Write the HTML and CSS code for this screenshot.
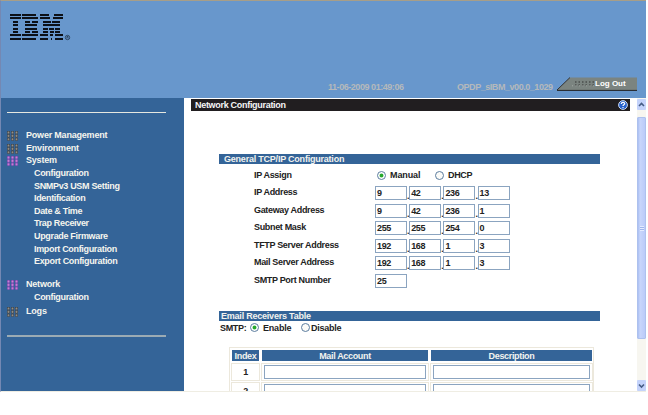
FILE: index.html
```html
<!DOCTYPE html>
<html lang="en">
<head>
<meta charset="utf-8">
<title>Network Configuration</title>
<link rel="stylesheet" href="styles.css">
</head>
<body>
<div class="frame">
  <header class="header">
    <svg class="logo" viewBox="0 0 62 27" role="img" aria-label="IBM">
      <g class="stripes">
        <path d="M0 1h10.5M12 1h14M29.5 1h9.5M44 1h9"/>
        <path d="M0 4.4h10.5M12 4.4h16M29.5 4.4h10.5M43 4.4h10"/>
        <path d="M3 7.8h5M15 7.8h5M22 7.8h6M33 7.8h8M42 7.8h8"/>
        <path d="M3 11.2h5M15 11.2h12M33 11.2h17"/>
        <path d="M3 14.5h5M15 14.5h12M33 14.5h5M39 14.5h5M45 14.5h5"/>
        <path d="M3 17.8h5M15 17.8h5M22 17.8h6M33 17.8h5M39.5 17.8h4M45 17.8h5"/>
        <path d="M0 21.2h10.5M12 21.2h16M29.5 21.2h8.5M40.3 21.2h2.4M45 21.2h8"/>
        <path d="M0 24.5h10.5M12 24.5h14M29.5 24.5h8.5M41 24.5h1M45 24.5h8"/>
      </g>
      <circle class="reg" cx="57.5" cy="23.5" r="2.2"/>
      <path class="reg" d="M57 24.5v-2h1v1l1 1"/>
    </svg>
    <div class="date">11-06-2009 01:49:06</div>
    <div class="version">OPDP_sIBM_v00.0_1029</div>
    <div class="logout">
      <svg class="logout-shape" viewBox="0 0 80 14">
        <path d="M0 13L13 .5H80V13Z" fill="#7b8480"/>
        <path d="M0 13L13 .5" stroke="#333"/>
        <path d="M0 13.4H80" stroke="#222"/>
        <path d="M18 5H37M18 8H37" stroke="#333" stroke-dasharray="1.5 2"/>
        <path d="M15 8.8H37" stroke="#a5aaa5" stroke-dasharray="1 2.5"/>
      </svg>
      <span>Log Out</span>
    </div>
  </header>
  <div class="body">
    <nav class="nav">
      <ul class="menu">
        <li class="top"><i class="dots"></i>Power Management</li>
        <li class="top"><i class="dots"></i>Environment</li>
        <li class="top"><i class="dots open"></i>System</li>
        <li>Configuration</li>
        <li class="wide">SNMPv3 USM Setting</li>
        <li>Identification</li>
        <li>Date &amp; Time</li>
        <li>Trap Receiver</li>
        <li>Upgrade Firmware</li>
        <li>Import Configuration</li>
        <li>Export Configuration</li>
        <li class="top network"><i class="dots open"></i>Network</li>
        <li>Configuration</li>
        <li class="top logs"><i class="dots"></i>Logs</li>
      </ul>
    </nav>
    <main class="main">
      <div class="title"><span>Network Configuration</span>
        <svg class="help" viewBox="0 0 10 10"><circle cx="5" cy="5" r="4.4" fill="#2862cc" stroke="#dfe9fa" stroke-width=".9"/><path d="M3.3 3.9C3.3 1.8 6.8 1.9 6.7 3.8C6.6 4.9 5 4.8 5 6.1M5 7v1.1" fill="none" stroke="#fff" stroke-width="1.2"/></svg>
      </div>
      <h2 class="bar general">General TCP/IP Configuration</h2>
      <div class="form">
        <div class="row assign"><label>IP Assign</label><i class="radio on"></i><b class="manual">Manual</b><i class="radio"></i><b>DHCP</b></div>
        <div class="row"><label>IP Address</label><span class="box">9</span><em>.</em><span class="box">42</span><em>.</em><span class="box">236</span><em>.</em><span class="box">13</span></div>
        <div class="row"><label>Gateway Address</label><span class="box">9</span><em>.</em><span class="box">42</span><em>.</em><span class="box">236</span><em>.</em><span class="box">1</span></div>
        <div class="row"><label>Subnet Mask</label><span class="box">255</span><em>.</em><span class="box">255</span><em>.</em><span class="box">254</span><em>.</em><span class="box">0</span></div>
        <div class="row"><label>TFTP Server Address</label><span class="box">192</span><em>.</em><span class="box">168</span><em>.</em><span class="box">1</span><em>.</em><span class="box">3</span></div>
        <div class="row"><label>Mail Server Address</label><span class="box">192</span><em>.</em><span class="box">168</span><em>.</em><span class="box">1</span><em>.</em><span class="box">3</span></div>
        <div class="row"><label>SMTP Port Number</label><span class="box">25</span></div>
      </div>
      <h2 class="bar email">Email Receivers Table</h2>
      <div class="smtp"><span>SMTP:</span><i class="radio on"></i><b class="enable">Enable</b><i class="radio"></i><b>Disable</b></div>
      <div class="table">
        <div class="th">Index</div><div class="th">Mail Account</div><div class="th">Description</div>
        <div class="td">1</div><div class="td"><span class="field"></span></div><div class="td"><span class="field"></span></div>
        <div class="td">2</div><div class="td"><span class="field"></span></div><div class="td"><span class="field"></span></div>
      </div>
    </main>
    <div class="scroll">
      <div class="arrow"><svg viewBox="0 0 9 11"><path d="M2 7L4.5 4.5L7 7"/></svg></div>
      <div class="thumb"><i></i></div>
      <div class="arrow down"><svg viewBox="0 0 9 11"><path d="M2 4.5L4.5 7L7 4.5"/></svg></div>
    </div>
  </div>
</div>
</body>
</html>
```
FILE: styles.css
```css
* { box-sizing: border-box; }
body {
  margin: 0;
  background: #fff;
  color: #222;
  font: bold 9px/12px "Liberation Sans", Arial, sans-serif;
  letter-spacing: -0.33px;
}
i, em { font-style: normal; }
.frame {
  width: 646px;
  height: 392px;
  overflow: hidden;
  border-top: 1px solid #a79e88;
  border-left: 1px solid #7488b3;
  border-bottom: 1px solid #efede3;
}
.header {
  display: grid;
  grid-template-columns: 327px 129px 100px 80px;
  height: 97px;
  background: #6897cc;
  align-items: start;
}
.logo { width: 62px; height: 27px; margin: 13px 0 0 9px; }
.stripes { stroke: #0c1017; stroke-width: 2; fill: none; shape-rendering: crispEdges; }
.reg { stroke: #24384f; stroke-width: .8; fill: none; }
.date, .version { margin-top: 80px; color: #b5b9bb; white-space: nowrap; letter-spacing: -0.45px; }
.logout { display: grid; margin-top: 76px; color: #fff; font-size: 8px; letter-spacing: 0; }
.logout > * { grid-area: 1 / 1; }
.logout-shape { width: 80px; height: 14px; }
.logout span { padding-left: 38px; line-height: 13px; }
.body { display: flex; height: 293px; }
.nav { width: 183px; background: #346498; color: #f5f5ee; padding: 14px 0 0 6px; }
.menu {
  list-style: none;
  margin: 0;
  padding: 16px 0 0;
  width: 159px;
  height: 225px;
  border-top: 1px solid #e6e8e0;
  border-bottom: 2px solid #9babb4;
}
.menu li { height: 12.65px; line-height: 13px; padding-left: 27px; white-space: nowrap; }
.menu .top { display: flex; padding-left: 0; letter-spacing: -0.2px; }
.menu .network { margin-top: 10px; }
.menu .logs { margin-top: 1.6px; }
.dots {
  width: 12px;
  height: 10px;
  margin: 2px 7px 0 0;
  background: radial-gradient(circle at 1.5px 1.5px, #99958c .4px, #41474d 1.4px, transparent 2.1px) 0 0 / 4px 3.4px;
}
.dots.open { background-image: radial-gradient(circle at 1.5px 1.5px, #c98ad4 .4px, #8048b2 1.4px, transparent 2.1px); }
.main { width: 452px; background: #fff; overflow: hidden; }
.title {
  display: flex;
  justify-content: space-between;
  align-items: center;
  width: 439px;
  height: 13px;
  margin: 0 0 0 7px;
  padding: 0 2px 0 4px;
  border-top: 1px solid #fff;
  background: #211e20;
  color: #f5f5f5;
  letter-spacing: -0.3px;
}
.help { width: 10px; height: 10px; }
.bar {
  width: 381px;
  height: 10px;
  margin: 0 0 0 35px;
  background: #346498;
  color: #f2f3ef;
  font-size: 9px;
  line-height: 11px;
}
.general { margin-top: 43px; padding-left: 5px; letter-spacing: -0.22px; }
.email { margin-top: 21px; padding-left: 2px; letter-spacing: -0.22px; }
.form { padding: 3px 0 0 70px; }
.row { display: flex; height: 17.6px; padding-top: 1.5px; }
.row label { width: 121px; line-height: 12px; }
.row.assign { height: 17.5px; padding-top: 1px; }
.row.assign label { line-height: 14px; }
.assign .radio { margin: 3px 4px 0 2px; }
.assign b { line-height: 14px; }
.manual { width: 43px; letter-spacing: -0.1px; }
.box {
  width: 32px;
  height: 14px;
  border: 1px solid #8ba4c0;
  padding-left: 1px;
  line-height: 12px;
  letter-spacing: -0.35px;
}
.row em { width: 2.2px; padding-top: 4px; }
.radio {
  flex: none;
  width: 9px;
  height: 9px;
  border: 1px solid #5c7d9f;
  border-radius: 50%;
  background: #fbfbf8;
}
.radio.on { background: radial-gradient(circle, #26a82d 1.4px, #fff 2.4px); }
.smtp { display: flex; height: 14px; margin-left: 36px; line-height: 14px; }
.smtp span { width: 30px; }
.smtp .radio { margin: 2px 4px 0 0; }
.smtp b { letter-spacing: -0.25px; }
.smtp .enable { width: 38px; letter-spacing: -0.2px; }
.smtp .radio:not(.on) { margin-right: 1px; }
.table {
  display: grid;
  grid-template-columns: 29px 168px 163px;
  grid-template-rows: 13px 18px 18px;
  width: 365px;
  margin: 11.5px 0 0 45px;
  padding: 1px;
  gap: 1px;
  border: 1px solid #ece8dc;
  text-align: center;
}
.th, .td { border: 1px solid #ece8dc; }
.th { border-color: #fff; background: #346498; color: #f2f3ef; line-height: 12px; }
.td { line-height: 14px; padding: 1px; }
.field { display: block; height: 14px; margin: 0 1px; border: 1px solid #8ba4c0; }
.scroll { display: flex; flex-direction: column; width: 10px; background: #f7f6f0; border-left: 1px solid #fff; }
.arrow { height: 11px; margin-top: 1px; background: #c4d3fb; border-radius: 1px; flex: none; }
.arrow svg { display: block; width: 9px; height: 11px; fill: none; stroke: #465d86; stroke-width: 1.6; }
.thumb {
  display: grid;
  place-items: center;
  height: 222px;
  margin-top: 7px;
  background: linear-gradient(90deg, #aabff2, #c8d6fb 30%, #bacbf9);
  border: 1px solid #adc1ee;
  border-radius: 1px;
}
.thumb i { width: 4px; height: 5px; background: repeating-linear-gradient(#e4ecff 0 1px, #9eb5ec 1px 2px); }
.down { margin-top: auto; }
```
